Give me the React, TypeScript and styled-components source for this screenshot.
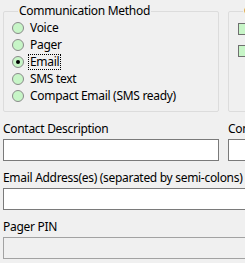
import React from 'react';
import styled, { createGlobalStyle } from 'styled-components';

const GlobalStyle = createGlobalStyle`
  html, body {
    margin: 0;
    padding: 0;
    background: #f0f0f0;
    overflow: hidden;
  }
  body {
    font-family: "Noto Sans", "Open Sans", sans-serif;
    font-size: 12px;
    letter-spacing: -0.3px;
    color: #000;
  }
`;

const Page = styled.div`
  width: 441px;
  padding: 3px 0 0 3px;
`;

const TopRow = styled.div`
  display: flex;
  gap: 9px;
`;

const GroupBox = styled.fieldset`
  margin: 0;
  padding: 0 0 7px 8px;
  width: 216px;
  box-sizing: border-box;
  border: 1px solid #dcdcdc;
  border-radius: 2px;
  min-width: 0;
`;

const Legend = styled.legend`
  margin-left: 6px;
  padding: 0 1px;
  line-height: 16px;
  white-space: nowrap;
`;

const RadioRow = styled.label`
  display: flex;
  align-items: center;
  height: 17px;
  gap: 5px;
  white-space: nowrap;
`;

const RadioDot = styled.span<{ $checked?: boolean }>`
  width: 10px;
  height: 10px;
  border-radius: 50%;
  border: 1px solid #8a8a8a;
  background: #c7f5c7;
  display: flex;
  align-items: center;
  justify-content: center;

  &::after {
    content: '';
    width: 4px;
    height: 4px;
    border-radius: 50%;
    background: ${(p) => (p.$checked ? '#000' : 'transparent')};
  }
`;

const RadioText = styled.span<{ $focused?: boolean }>`
  line-height: 14px;
  padding: 0 1px;
  outline: ${(p) => (p.$focused ? '1px dotted #000' : 'none')};
`;

const CheckList = styled.div`
  display: flex;
  flex-direction: column;
  gap: 10px;
  padding-top: 4px;
  padding-left: 1px;
`;

const GreenBox = styled.span`
  width: 10px;
  height: 10px;
  border: 1px solid #6f6f6f;
  background: #c7f5c7;
`;

const Fields = styled.div`
  display: flex;
  flex-direction: column;
  gap: 9px;
  margin-top: 9px;
`;

const FieldRow = styled.div`
  display: flex;
  gap: 9px;
`;

const Field = styled.div<{ $wide?: boolean }>`
  display: flex;
  flex-direction: column;
  gap: 2px;
  width: ${(p) => (p.$wide ? '441px' : '216px')};
  flex-shrink: 0;
`;

const FieldLabel = styled.label`
  line-height: 16px;
  white-space: nowrap;
`;

const TextBox = styled.input`
  box-sizing: border-box;
  height: 22px;
  width: 100%;
  margin: 0;
  border: 1px solid #7a7a7a;
  background: ${(p) => (p.disabled ? '#f0f0f0' : '#fff')};
  border-color: ${(p) => (p.disabled ? '#a2a2a2' : '#7a7a7a')};
  font: inherit;
  padding: 0 3px;
  outline: none;
`;

const methods = ['Voice', 'Pager', 'Email', 'SMS text', 'Compact Email (SMS ready)'];

export default function App() {
  const selected = 'Email';

  return (
    <Page>
      <GlobalStyle />
      <TopRow>
        <GroupBox>
          <Legend>Communication Method</Legend>
          {methods.map((m) => (
            <RadioRow key={m}>
              <RadioDot $checked={m === selected} />
              <RadioText $focused={m === selected}>{m}</RadioText>
            </RadioRow>
          ))}
        </GroupBox>
        <GroupBox>
          <Legend>Options</Legend>
          <CheckList>
            <GreenBox />
            <GreenBox />
          </CheckList>
        </GroupBox>
      </TopRow>
      <Fields>
        <FieldRow>
          <Field>
            <FieldLabel>Contact Description</FieldLabel>
            <TextBox type="text" />
          </Field>
          <Field>
            <FieldLabel>Contact Name</FieldLabel>
            <TextBox type="text" />
          </Field>
        </FieldRow>
        <Field $wide>
          <FieldLabel>Email Address(es) (separated by semi-colons)</FieldLabel>
          <TextBox type="text" />
        </Field>
        <Field $wide>
          <FieldLabel>Pager PIN</FieldLabel>
          <TextBox type="text" disabled />
        </Field>
      </Fields>
    </Page>
  );
}
